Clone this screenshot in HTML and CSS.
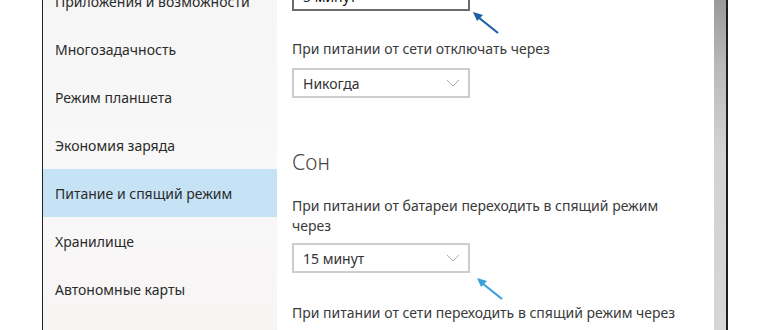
FILE: index.html
```html
<!DOCTYPE html>
<html lang="ru">
<head>
  <meta charset="UTF-8">
  <title>Питание и спящий режим</title>
  <link rel="stylesheet" href="styles.css">
</head>
<body>
  <div class="page">
    <div class="window">
      <nav class="sidebar">
        <ul class="menu">
          <li class="item">Приложения и возможности</li>
          <li class="item">Многозадачность</li>
          <li class="item">Режим планшета</li>
          <li class="item">Экономия заряда</li>
          <li class="item active">Питание и спящий режим</li>
          <li class="item">Хранилище</li>
          <li class="item">Автономные карты</li>
        </ul>
      </nav>

      <main class="content">
        <div class="select focused">
          <span>5 минут</span>
          <svg class="chevron" width="14" height="8" viewBox="0 0 14 8"><path d="M1 1 L7 7 L13 1" fill="none" stroke="#999" stroke-width="1"/></svg>
          <svg class="pointer" width="28" height="24" viewBox="0 0 28 24">
            <path d="M26 22 L6 6" stroke="#1d5fa8" stroke-width="2.2" fill="none"/>
            <polygon points="1,1 11,4 5,10" fill="#1d5fa8"/>
          </svg>
        </div>

        <p class="label gap-top">При питании от сети отключать через</p>
        <div class="select">
          <span>Никогда</span>
          <svg class="chevron" width="14" height="8" viewBox="0 0 14 8"><path d="M1 1 L7 7 L13 1" fill="none" stroke="#aaa" stroke-width="1"/></svg>
        </div>

        <h2 class="heading">Сон</h2>

        <p class="label">При питании от батареи переходить в спящий режим через</p>
        <div class="select">
          <span>15 минут</span>
          <svg class="chevron" width="14" height="8" viewBox="0 0 14 8"><path d="M1 1 L7 7 L13 1" fill="none" stroke="#aaa" stroke-width="1"/></svg>
          <svg class="pointer light" width="28" height="24" viewBox="0 0 28 24">
            <path d="M26 22 L6 6" stroke="#3a9fdc" stroke-width="2.2" fill="none"/>
            <polygon points="1,1 11,4 5,10" fill="#3a9fdc"/>
          </svg>
        </div>

        <p class="label gap-big">При питании от сети переходить в спящий режим через</p>
      </main>

      <div class="scrollbar"></div>
    </div>
  </div>
</body>
</html>
```

FILE: styles.css
```css
* {
  box-sizing: border-box;
}

body {
  margin: 0;
  background-color: #fff;
  font-family: 'Noto Sans', 'Open Sans', sans-serif;
  color: #333;
}

.page {
  width: 770px;
  height: 330px;
  overflow: hidden;
  padding-left: 42px;
}

.window {
  display: flex;
  width: 686px;
  height: 330px;
  border-left: 1px solid #222;
  border-right: 2px solid #1e1e1e;
}

.sidebar {
  width: 234px;
  background: linear-gradient(to bottom, #f6f6f6, #f9f8f8 60%, #f7f5f4);
}

.menu {
  list-style: none;
  margin: -23px 0 0;
  padding: 0;
}

.item {
  height: 48px;
  display: flex;
  align-items: center;
  padding-left: 12px;
  font-size: 14px;
  color: #2b2b2b;
}

.item.active {
  background-color: #c6e3f6;
}

.content {
  flex: 1;
  padding: 0 0 0 15px;
  margin-top: -19px;
}

.select {
  position: relative;
  width: 178px;
  height: 30px;
  border: 2px solid #cdcdcd;
  display: flex;
  align-items: center;
  justify-content: space-between;
  padding: 0 8px 0 9px;
  font-size: 14px;
  color: #333;
  background-color: #fff;
}

.select.focused {
  border-color: #6b6b6b;
  color: #111;
}

.chevron {
  display: block;
}

.pointer {
  position: absolute;
  left: 178px;
  top: 28px;
}

.pointer.light {
  left: 182px;
  top: 32px;
}

.label {
  margin: 9px 0 9px;
  font-size: 14px;
  line-height: 20px;
  width: 400px;
  color: #3a3a3a;
}

.gap-top {
  margin-top: 28px;
}

.gap-big {
  margin-top: 30px;
}

.heading {
  margin: 50px 0 20px;
  font-size: 21px;
  line-height: 28px;
  font-weight: 300;
  color: #444;
}

.heading + .label {
  margin-top: 0;
  margin-bottom: 7px;
}

.scrollbar {
  width: 12px;
  background: linear-gradient(to bottom, #9a9a9a, #b9b9b9 20%, #d2d2d2 45%, #d6d6d6);
}
```
